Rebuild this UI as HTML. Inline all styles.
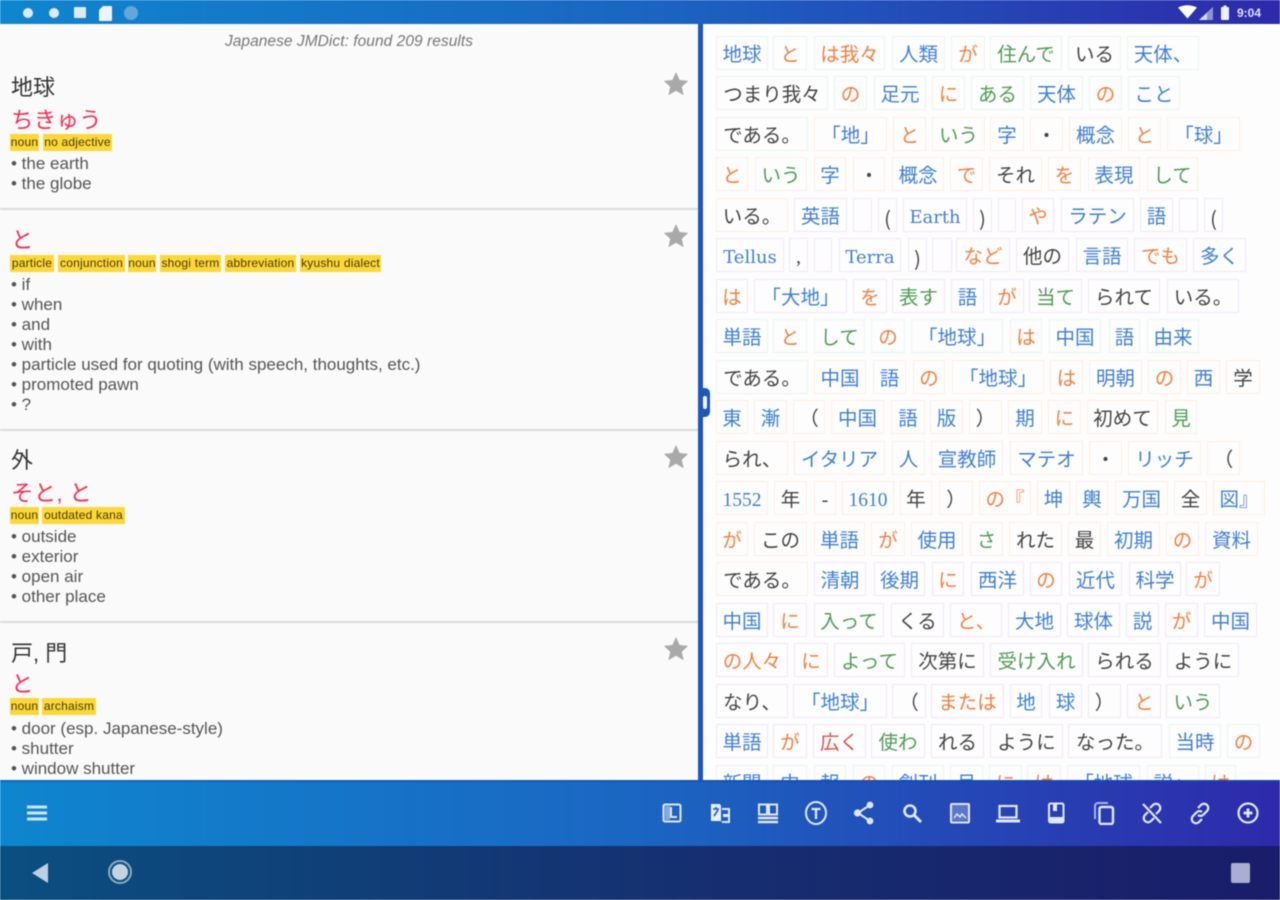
<!DOCTYPE html>
<html lang="ja"><head><meta charset="utf-8"><title>Japanese JMDict</title>
<style>
html,body{margin:0;padding:0;width:1280px;height:900px;overflow:hidden;background:#fafafa}
body{position:relative;font-family:"Liberation Sans","Noto Sans CJK JP",sans-serif}
.abs,.l,.t,.r,.r i,svg{position:absolute}
#main{position:absolute;left:0;top:0;width:1280px;height:900px;filter:blur(.6px)}
.l{white-space:nowrap}
.d{left:11px;font-size:17px;line-height:20px;color:#555}
.h{left:11px;font-size:22px;line-height:28px;color:#333}
.p{left:11px;font-size:22.500px;line-height:30px;color:#f52f52;letter-spacing:.2px}
.t{height:17px;line-height:17px;background:#fdd835;font-size:12px;letter-spacing:.2px;color:#44391a;text-align:center;white-space:nowrap;overflow:hidden}
.sep{position:absolute;left:0;width:698px;height:2px;background:#dcdcdc}
.r{left:0;width:1280px;height:34px;font-family:"Liberation Serif","Noto Sans CJK JP",serif;font-size:19.500px;line-height:38px}
.r i{font-style:normal;box-sizing:border-box;top:0;height:34px;border:1.500px solid #f0f0f0;text-align:center;white-space:nowrap;background:#fdfdfd;overflow:hidden}
.G i{border-color:#ebf4ed}.O i{border-color:#fdf0e2}.P i{border-color:#f1e9f7}
.r i.xg{border-color:#ebf4ed}.r i.xo{border-color:#fdf0e2}.r i.xp{border-color:#f1e9f7}
.r i.la{font-family:"DejaVu Serif",serif;font-size:18px}
.r i.pa{font-family:"Noto Sans CJK JP",sans-serif;font-size:20px}
.b{color:#4080d2}.o{color:#f08040}.g{color:#4f9c55}.k{color:#444}.e{color:#d8504e}
.ic{top:801px;width:24px;height:24px;fill:none;stroke:#dfe8f7;stroke-width:2}
</style></head><body>
<div id="main">
<div class="abs" style="left:705px;top:24px;width:575px;height:757px;background:#fdfdfd"></div>

<div class="l" style="left:0;width:698px;top:33px;text-align:center;font-style:italic;font-size:15.500px;letter-spacing:.05px;line-height:17px;color:#777">Japanese JMDict: found 209 results</div>

<div class="l h" style="top:74px">地球</div>
<div class="l p" style="top:103px;top:106px">ちきゅう</div>
<div class="t" style="left:10px;top:134px;width:29px">noun</div><div class="t" style="left:43px;top:134px;width:69px">no adjective</div>
<div class="l d" style="top:154px">• the earth</div>
<div class="l d" style="top:174px">• the globe</div>
<div class="sep" style="top:208px"></div>

<div class="l p" style="top:226px">と</div>
<div class="t" style="left:10px;top:255px;width:44px">particle</div><div class="t" style="left:58px;top:255px;width:67px">conjunction</div><div class="t" style="left:128px;top:255px;width:28px">noun</div><div class="t" style="left:160px;top:255px;width:61px">shogi term</div><div class="t" style="left:225px;top:255px;width:71px">abbreviation</div><div class="t" style="left:300px;top:255px;width:81px">kyushu dialect</div>
<div class="l d" style="top:275px">• if</div>
<div class="l d" style="top:295px">• when</div>
<div class="l d" style="top:315px">• and</div>
<div class="l d" style="top:335px">• with</div>
<div class="l d" style="top:355px">• particle used for quoting (with speech, thoughts, etc.)</div>
<div class="l d" style="top:375px">• promoted pawn</div>
<div class="l d" style="top:395px">• ?</div>
<div class="sep" style="top:429px"></div>

<div class="l h" style="top:447px">外</div>
<div class="l p" style="top:479px">そと, と</div>
<div class="t" style="left:10px;top:507px;width:29px">noun</div><div class="t" style="left:42px;top:507px;width:83px">outdated kana</div>
<div class="l d" style="top:527px">• outside</div>
<div class="l d" style="top:547px">• exterior</div>
<div class="l d" style="top:567px">• open air</div>
<div class="l d" style="top:587px">• other place</div>
<div class="sep" style="top:621px"></div>

<div class="l h" style="top:640px">戸, 門</div>
<div class="l p" style="top:670px">と</div>
<div class="t" style="left:10px;top:698px;width:29px">noun</div><div class="t" style="left:42px;top:698px;width:54px">archaism</div>
<div class="l d" style="top:719px">• door (esp. Japanese-style)</div>
<div class="l d" style="top:739px">• shutter</div>
<div class="l d" style="top:759px">• window shutter</div>

<svg style="left:663px;top:71px" width="26" height="26" viewBox="0 0 26 26"><path fill="#a9a9a9" d="M13 1l3.600 8 8.600.9-6.400 5.800 1.800 8.500L13 19.800l-7.600 4.400 1.800-8.500L.8 9.900 9.400 9z"/></svg>
<svg style="left:663px;top:223px" width="26" height="26" viewBox="0 0 26 26"><path fill="#a9a9a9" d="M13 1l3.600 8 8.600.9-6.400 5.800 1.800 8.500L13 19.800l-7.600 4.400 1.800-8.500L.8 9.900 9.400 9z"/></svg>
<svg style="left:663px;top:444px" width="26" height="26" viewBox="0 0 26 26"><path fill="#a9a9a9" d="M13 1l3.600 8 8.600.9-6.400 5.800 1.800 8.500L13 19.800l-7.600 4.400 1.800-8.500L.8 9.900 9.400 9z"/></svg>
<svg style="left:663px;top:636px" width="26" height="26" viewBox="0 0 26 26"><path fill="#a9a9a9" d="M13 1l3.600 8 8.600.9-6.400 5.800 1.800 8.500L13 19.800l-7.600 4.400 1.800-8.500L.8 9.900 9.400 9z"/></svg>

<div class="r G" style="top:36px"><i class="b" style="left:716px;width:52px">地球</i><i class="o" style="left:773px;width:34px">と</i><i class="o" style="left:814px;width:71px">は我々</i><i class="b" style="left:892px;width:53px">人類</i><i class="o" style="left:951px;width:34px">が</i><i class="g" style="left:990px;width:72px">住んで</i><i class="k" style="left:1068px;width:53px">いる</i><i class="b" style="left:1127px;width:72px">天体、</i></div>
<div class="r G" style="top:76px"><i class="k" style="left:716px;width:112px">つまり我々</i><i class="o" style="left:834px;width:33px">の</i><i class="b" style="left:874px;width:52px">足元</i><i class="o" style="left:932px;width:33px">に</i><i class="g" style="left:971px;width:53px">ある</i><i class="b" style="left:1030px;width:53px">天体</i><i class="o" style="left:1089px;width:33px">の</i><i class="b" style="left:1128px;width:52px">こと</i></div>
<div class="r O" style="top:117px"><i class="k xg" style="left:716px;width:92px">である。</i><i class="b" style="left:814px;width:73px">「地」</i><i class="o" style="left:893px;width:33px">と</i><i class="g" style="left:932px;width:53px">いう</i><i class="b" style="left:990px;width:34px">字</i><i class="k" style="left:1030px;width:33px">・</i><i class="b" style="left:1069px;width:53px">概念</i><i class="o" style="left:1128px;width:33px">と</i><i class="b" style="left:1167px;width:73px">「球」</i></div>
<div class="r O" style="top:157px"><i class="o" style="left:716px;width:32px">と</i><i class="g" style="left:755px;width:52px">いう</i><i class="b" style="left:814px;width:32px">字</i><i class="k" style="left:853px;width:32px">・</i><i class="b" style="left:892px;width:52px">概念</i><i class="o" style="left:950px;width:33px">で</i><i class="k" style="left:989px;width:53px">それ</i><i class="o" style="left:1048px;width:33px">を</i><i class="b" style="left:1088px;width:52px">表現</i><i class="g" style="left:1147px;width:51px">して</i></div>
<div class="r P" style="top:198px"><i class="k xo" style="left:716px;width:72px">いる。</i><i class="b" style="left:794px;width:53px">英語</i><i style="left:853px;width:19px"></i><i class="k pa" style="left:878px;width:19px">(</i><i class="b la" style="left:903px;width:64px">Earth</i><i class="k pa" style="left:973px;width:19px">)</i><i style="left:998px;width:18px"></i><i class="o" style="left:1022px;width:32px">や</i><i class="b" style="left:1061px;width:73px">ラテン</i><i class="b" style="left:1140px;width:33px">語</i><i style="left:1179px;width:19px"></i><i class="k pa" style="left:1204px;width:19px">(</i></div>
<div class="r P" style="top:238px"><i class="b la" style="left:716px;width:68px">Tellus</i><i class="k" style="left:789px;width:19px">,</i><i style="left:814px;width:18px"></i><i class="b la" style="left:839px;width:62px">Terra</i><i class="k pa" style="left:908px;width:19px">)</i><i style="left:932px;width:20px"></i><i class="o" style="left:956px;width:54px">など</i><i class="k" style="left:1016px;width:53px">他の</i><i class="b" style="left:1076px;width:52px">言語</i><i class="o" style="left:1134px;width:53px">でも</i><i class="b" style="left:1193px;width:53px">多く</i></div>
<div class="r P" style="top:279px"><i class="o" style="left:716px;width:32px">は</i><i class="b" style="left:754px;width:93px">「大地」</i><i class="o" style="left:853px;width:34px">を</i><i class="g" style="left:892px;width:53px">表す</i><i class="b" style="left:951px;width:33px">語</i><i class="o" style="left:990px;width:34px">が</i><i class="g" style="left:1029px;width:53px">当て</i><i class="k" style="left:1088px;width:72px">られて</i><i class="k" style="left:1167px;width:72px">いる。</i></div>
<div class="r G" style="top:319px"><i class="b" style="left:716px;width:52px">単語</i><i class="o" style="left:773px;width:34px">と</i><i class="g" style="left:814px;width:51px">して</i><i class="o" style="left:871px;width:34px">の</i><i class="b" style="left:911px;width:92px">「地球」</i><i class="o" style="left:1010px;width:32px">は</i><i class="b" style="left:1049px;width:52px">中国</i><i class="b" style="left:1109px;width:31px">語</i><i class="b" style="left:1147px;width:52px">由来</i></div>
<div class="r O" style="top:360px"><i class="k xg" style="left:716px;width:92px">である。</i><i class="b" style="left:814px;width:52px">中国</i><i class="b" style="left:873px;width:33px">語</i><i class="o" style="left:913px;width:32px">の</i><i class="b" style="left:952px;width:92px">「地球」</i><i class="o" style="left:1050px;width:33px">は</i><i class="b" style="left:1089px;width:53px">明朝</i><i class="o" style="left:1148px;width:33px">の</i><i class="b" style="left:1187px;width:33px">西</i><i class="k" style="left:1226px;width:34px">学</i></div>
<div class="r O" style="top:400px"><i class="b" style="left:716px;width:32px">東</i><i class="b" style="left:754px;width:33px">漸</i><i class="k" style="left:793px;width:32px">（</i><i class="b" style="left:831px;width:53px">中国</i><i class="b" style="left:891px;width:34px">語</i><i class="b" style="left:930px;width:33px">版</i><i class="k" style="left:969px;width:33px">）</i><i class="b" style="left:1008px;width:34px">期</i><i class="o" style="left:1048px;width:33px">に</i><i class="k" style="left:1087px;width:71px">初めて</i><i class="g" style="left:1165px;width:32px">見</i></div>
<div class="r O" style="top:441px"><i class="k" style="left:716px;width:72px">られ、</i><i class="b" style="left:794px;width:91px">イタリア</i><i class="b" style="left:892px;width:33px">人</i><i class="b" style="left:931px;width:72px">宣教師</i><i class="b" style="left:1010px;width:73px">マテオ</i><i class="k" style="left:1089px;width:33px">・</i><i class="b" style="left:1128px;width:73px">リッチ</i><i class="k" style="left:1207px;width:33px">（</i></div>
<div class="r O" style="top:481px"><i class="b" style="left:716px;width:52px">1552</i><i class="k" style="left:774px;width:33px">年</i><i class="k" style="left:814px;width:22px">-</i><i class="b" style="left:842px;width:52px">1610</i><i class="k" style="left:900px;width:32px">年</i><i class="k" style="left:939px;width:34px">）</i><i class="o" style="left:979px;width:52px">の『</i><i class="b" style="left:1037px;width:33px">坤</i><i class="b" style="left:1076px;width:32px">輿</i><i class="b" style="left:1115px;width:53px">万国</i><i class="k" style="left:1174px;width:33px">全</i><i class="b" style="left:1213px;width:52px">図』</i></div>
<div class="r O" style="top:522px"><i class="o" style="left:716px;width:32px">が</i><i class="k" style="left:754px;width:53px">この</i><i class="b" style="left:814px;width:51px">単語</i><i class="o" style="left:871px;width:34px">が</i><i class="b" style="left:911px;width:52px">使用</i><i class="g" style="left:970px;width:33px">さ</i><i class="k" style="left:1009px;width:53px">れた</i><i class="k" style="left:1068px;width:33px">最</i><i class="b" style="left:1107px;width:53px">初期</i><i class="o" style="left:1166px;width:33px">の</i><i class="b" style="left:1205px;width:53px">資料</i></div>
<div class="r P" style="top:562px"><i class="k xo" style="left:716px;width:92px">である。</i><i class="b" style="left:814px;width:52px">清朝</i><i class="b" style="left:874px;width:51px">後期</i><i class="o" style="left:932px;width:32px">に</i><i class="b" style="left:971px;width:53px">西洋</i><i class="o" style="left:1030px;width:32px">の</i><i class="b" style="left:1069px;width:53px">近代</i><i class="b" style="left:1129px;width:52px">科学</i><i class="o" style="left:1186px;width:34px">が</i></div>
<div class="r P" style="top:603px"><i class="b" style="left:716px;width:52px">中国</i><i class="o" style="left:773px;width:34px">に</i><i class="g" style="left:814px;width:70px">入って</i><i class="k" style="left:891px;width:53px">くる</i><i class="o" style="left:950px;width:52px">と、</i><i class="b" style="left:1008px;width:53px">大地</i><i class="b" style="left:1067px;width:53px">球体</i><i class="b" style="left:1126px;width:33px">説</i><i class="o" style="left:1165px;width:33px">が</i><i class="b" style="left:1204px;width:53px">中国</i></div>
<div class="r P" style="top:643px"><i class="o" style="left:716px;width:72px">の人々</i><i class="o" style="left:794px;width:34px">に</i><i class="g" style="left:834px;width:71px">よって</i><i class="k" style="left:911px;width:73px">次第に</i><i class="g" style="left:990px;width:93px">受け入れ</i><i class="k" style="left:1088px;width:73px">られる</i><i class="k" style="left:1167px;width:72px">ように</i></div>
<div class="r P" style="top:684px"><i class="k" style="left:716px;width:72px">なり、</i><i class="b" style="left:793px;width:94px">「地球」</i><i class="k" style="left:892px;width:34px">（</i><i class="o" style="left:931px;width:73px">または</i><i class="b" style="left:1010px;width:32px">地</i><i class="b" style="left:1049px;width:33px">球</i><i class="k" style="left:1088px;width:33px">）</i><i class="o" style="left:1127px;width:34px">と</i><i class="g" style="left:1166px;width:54px">いう</i></div>
<div class="r P" style="top:724px"><i class="b" style="left:716px;width:52px">単語</i><i class="o" style="left:773px;width:34px">が</i><i class="e" style="left:813px;width:53px">広く</i><i class="g" style="left:871px;width:54px">使わ</i><i class="k" style="left:931px;width:53px">れる</i><i class="k" style="left:990px;width:73px">ように</i><i class="k" style="left:1068px;width:94px">なった。</i><i class="b xg" style="left:1169px;width:52px">当時</i><i class="o xg" style="left:1227px;width:33px">の</i></div>
<div class="r G" style="top:765px"><i class="b" style="left:716px;width:52px">新聞</i><i class="b" style="left:773px;width:34px">中</i><i class="b" style="left:814px;width:32px">報</i><i class="o" style="left:853px;width:32px">の</i><i class="b" style="left:892px;width:52px">創刊</i><i class="b" style="left:950px;width:33px">号</i><i class="o" style="left:989px;width:33px">に</i><i class="o" style="left:1027px;width:34px">は</i><i class="b" style="left:1067px;width:73px">「地球</i><i class="b" style="left:1147px;width:52px">説」</i><i class="o" style="left:1205px;width:31px">は</i></div>

<div class="abs" style="left:698px;top:24px;width:5px;height:757px;background:#1b57bd"></div>
<div class="abs" style="left:699px;top:388px;width:11px;height:29px;background:#1b57bd;border-radius:0 5px 5px 0"></div>
<div class="abs" style="left:703px;top:396px;width:4px;height:13px;background:#f4f7fc;border-radius:2px"></div>

<div class="abs" style="left:0;top:0;width:1280px;height:24px;background:linear-gradient(90deg,#0f86cf 0%,#1b66c2 50%,#2e2aab 100%)"></div>
<div class="abs" style="left:0;top:780px;width:1280px;height:66px;background:linear-gradient(90deg,#0f86cf 0%,#1b66c2 50%,#2e2aab 100%)"></div>
<div class="abs" style="left:0;top:780px;width:1280px;height:2px;background:linear-gradient(90deg,#0c6bbd,#1a3fb0)"></div>
<div class="abs" style="left:0;top:846px;width:1280px;height:54px;background:linear-gradient(90deg,#0b4f80 0%,#162f70 55%,#1a1d6a 100%)"></div>

<!-- status icons left -->
<div class="abs" style="left:22.500px;top:8px;width:10px;height:10px;border-radius:50%;background:#dfeaf5"></div>
<div class="abs" style="left:48.500px;top:8px;width:10px;height:10px;border-radius:50%;background:#dfeaf5"></div>
<div class="abs" style="left:74px;top:7px;width:12px;height:11px;background:#dfeaf5;border-radius:1px"></div>
<svg style="left:99px;top:6px" width="13" height="15" viewBox="0 0 13 15"><path fill="#eef4fb" d="M4 0h8a1 1 0 0 1 1 1v13a1 1 0 0 1-1 1H1a1 1 0 0 1-1-1V4z"/></svg>
<div class="abs" style="left:124px;top:6px;width:14px;height:14px;border-radius:50%;background:#62a7dc"></div>

<!-- status icons right -->
<svg style="left:1178px;top:5px" width="54" height="16" viewBox="0 0 54 16"><path fill="#fff" d="M0 2.500Q9.500-2 19 2.500L9.500 13.500z"/><path fill="#d6daf0" d="M21 15L35 2v13z"/><path fill="#8f92d4" d="M29 8l6-6v13h-6z"/><rect x="43" y="2" width="8" height="13" rx="1" fill="#f0f2fb"/><rect x="45.500" y="0.500" width="3" height="2" fill="#f0f2fb"/></svg>
<div class="l" style="left:1237px;top:6px;font-size:12px;line-height:15px;font-weight:bold;color:#dfe3f5">9:04</div>

<!-- toolbar icons -->
<svg style="left:26px;top:803px" width="22" height="20" viewBox="0 0 22 20"><path stroke="#cfe3f5" stroke-width="3" d="M1 4h20M1 10h20M1 16h20"/></svg>
<svg class="ic" style="left:660px" viewBox="0 0 24 24"><rect x="3.500" y="3.500" width="17" height="17" rx="1.500"/><path fill="#dfe8f7" fill-opacity=".55" stroke="none" d="M5 5h5v14H5z"/><path d="M11 6v10h6"/></svg>
<svg class="ic" style="left:708px" viewBox="0 0 24 24"><path fill="#e8eefa" stroke="none" d="M3 3h9l1 2v16l-1-1H3z"/><path stroke="#2655bc" stroke-width="1.600" d="M5 8h6M8 6v2M6 15l4-6"/><path d="M14 8h7v13h-7"/><path fill="#e8eefa" stroke="none" d="M15 13h5v3h-5z"/></svg>
<svg class="ic" style="left:756px" viewBox="0 0 24 24"><rect x="3" y="3.500" width="8" height="10"/><rect x="13" y="3.500" width="8" height="10"/><path stroke-width="2.500" d="M2 17h20M2 21h20"/></svg>
<svg class="ic" style="left:804px" viewBox="0 0 24 24"><ellipse cx="12" cy="12" rx="10" ry="11"/><path stroke-width="2.300" d="M7.500 8h9M12 8v10"/></svg>
<svg class="ic" style="left:852px" viewBox="0 0 24 24"><path stroke-width="2" d="M18 4L6 12l12 8"/><circle cx="18" cy="4" r="2.400" fill="#dfe8f7"/><circle cx="5.500" cy="12" r="2.600" fill="#dfe8f7"/><circle cx="18" cy="20" r="2.400" fill="#dfe8f7"/></svg>
<svg class="ic" style="left:900px" viewBox="0 0 24 24"><circle cx="10" cy="10" r="5.500" stroke-width="2.600"/><path stroke-width="2.800" d="M14 14l7 7"/></svg>
<svg class="ic" style="left:948px" viewBox="0 0 24 24"><rect x="3" y="3" width="18" height="18.500" rx="1"/><path stroke-width="1.400" d="M6 17l3-4 3 3 2-3 4 4"/><path fill="#dfe8f7" fill-opacity=".3" stroke="none" d="M4 4h16v16H4z"/></svg>
<svg class="ic" style="left:996px" viewBox="0 0 24 24"><rect x="3.500" y="5" width="17" height="11.500" stroke-width="2.200"/><path stroke-width="3" d="M0 20h24"/></svg>
<svg class="ic" style="left:1044px" viewBox="0 0 24 24"><rect x="5" y="2.500" width="14.500" height="19" rx="1.500"/><path fill="#dfe8f7" stroke="none" d="M9 2h4v8H9zM5 16h14v5H5z"/></svg>
<svg class="ic" style="left:1092px" viewBox="0 0 24 24"><path stroke-opacity=".7" d="M16 2H6a3 3 0 0 0-3 3v13"/><rect x="7.500" y="6" width="13.500" height="17" rx="2" stroke-width="2.400"/></svg>
<svg class="ic" style="left:1140px" viewBox="0 0 24 24"><path stroke-width="2.200" d="M3 3l18 19M10 7l3-3a4 4 0 0 1 6 6l-3 3M14 17l-3 3a4 4 0 0 1-6-6l3-3"/></svg>
<svg class="ic" style="left:1188px" viewBox="0 0 24 24"><path stroke-width="2.200" d="M10 7l3-3a4 4 0 0 1 6 6l-4 4a4 4 0 0 1-5 0M14 11a4 4 0 0 0-5 0l-4 4a4 4 0 0 0 6 6l3-3"/></svg>
<svg class="ic" style="left:1236px" viewBox="0 0 24 24"><circle cx="12" cy="12" r="9.500" stroke-width="2.200"/><path stroke-width="2.800" d="M7.500 12h9M12 7.500v9"/></svg>

<!-- nav -->
<svg style="left:30px;top:862px" width="20" height="22" viewBox="0 0 20 22"><path fill="#bcd0df" d="M18 1v20L2 11z"/></svg>
<div class="abs" style="left:110px;top:862px;width:16px;height:16px;border-radius:50%;background:#c6d4e0;border:2px solid #0b4f80;box-shadow:0 0 0 2px #8fa9bf"></div>
<div class="abs" style="left:1231px;top:863px;width:19px;height:20px;border-radius:2px;background:#a9aed2"></div>
</div>
</body></html>
